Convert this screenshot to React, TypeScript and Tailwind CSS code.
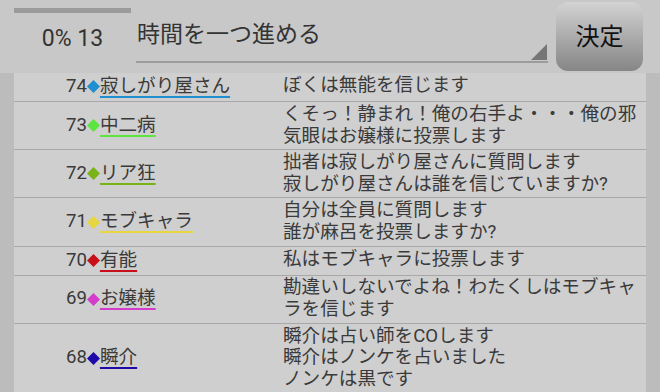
import React from 'react';

type Row = {
  no: number;
  name: string;
  color: string;
  lines: string[];
};

const rows: Row[] = [
  { no: 74, name: '寂しがり屋さん', color: '#1f8fcf', lines: ['ぼくは無能を信じます'] },
  {
    no: 73,
    name: '中二病',
    color: '#5be53f',
    lines: ['くそっ！静まれ！俺の右手よ・・・俺の邪', '気眼はお嬢様に投票します'],
  },
  {
    no: 72,
    name: 'リア狂',
    color: '#78b31a',
    lines: ['拙者は寂しがり屋さんに質問します', '寂しがり屋さんは誰を信じていますか?'],
  },
  {
    no: 71,
    name: 'モブキャラ',
    color: '#e8d640',
    lines: ['自分は全員に質問します', '誰が麻呂を投票しますか?'],
  },
  { no: 70, name: '有能', color: '#c8101a', lines: ['私はモブキャラに投票します'] },
  {
    no: 69,
    name: 'お嬢様',
    color: '#d43ccc',
    lines: ['勘違いしないでよね！わたくしはモブキャ', 'ラを信じます'],
  },
  {
    no: 68,
    name: '瞬介',
    color: '#1e0aa8',
    lines: ['瞬介は占い師をCOします', '瞬介はノンケを占いました', 'ノンケは黒です'],
  },
];

export default function App() {
  return (
    <div className="w-[660px] h-[392px] overflow-hidden flex flex-col bg-[#bcbcbc] font-['Roboto','Noto_Sans_CJK_JP',sans-serif]">
      {/* Header */}
      <div className="flex h-[73px] shrink-0 bg-[#c8c8c8]">
        <div className="ml-[14px] w-[117px] flex flex-col items-center">
          <div className="mt-[8px] h-[5px] w-full bg-[#9b9b9b]" />
          <div className="mt-[12px] text-[23px] leading-[27px] text-[#333]">0% 13</div>
        </div>

        {/* Spinner */}
        <div className="relative ml-[5px] w-[412px] h-[63px] border-b-2 border-[#9c9c9c] flex items-center">
          <span className="pl-[1px] pt-[8px] text-[23px] leading-[28px] text-[#333]">時間を一つ進める</span>
          <svg className="absolute right-[1px] bottom-[1px]" width="16" height="16" viewBox="0 0 16 16">
            <polygon points="16,0 16,16 0,16" fill="#767676" />
          </svg>
        </div>

        {/* Button */}
        <button className="ml-[8px] mt-[2px] w-[87px] h-[69px] rounded-[12px] bg-linear-to-b from-[#d3d3d3] to-[#868686] flex items-center justify-center text-[24px] text-[#111]">
          決定
        </button>
      </div>

      {/* Log list */}
      <div className="flex-1 px-[14px]">
        <div className="h-full bg-[#cfcfcf]">
          {rows.map((row) => (
            <div
              key={row.no}
              className="grid grid-cols-[269px_1fr] border-b border-[#a8a8a8] text-[18.6px] text-[#3a3a3a]"
            >
              <div className="flex items-center pl-[52px]">
                <span>{row.no}</span>
                <svg className="shrink-0" width="13" height="13" viewBox="0 0 13 13">
                  <polygon points="6.5,0 13,6.5 6.5,13 0,6.5" fill={row.color} />
                </svg>
                <span
                  className="underline decoration-2 underline-offset-[4px]"
                  style={{ textDecorationColor: row.color }}
                >
                  {row.name}
                </span>
              </div>
              <div className="py-[1.875px] leading-[21.75px]">
                {row.lines.map((line, i) => (
                  <div key={i}>{line}</div>
                ))}
              </div>
            </div>
          ))}
        </div>
      </div>
    </div>
  );
}
